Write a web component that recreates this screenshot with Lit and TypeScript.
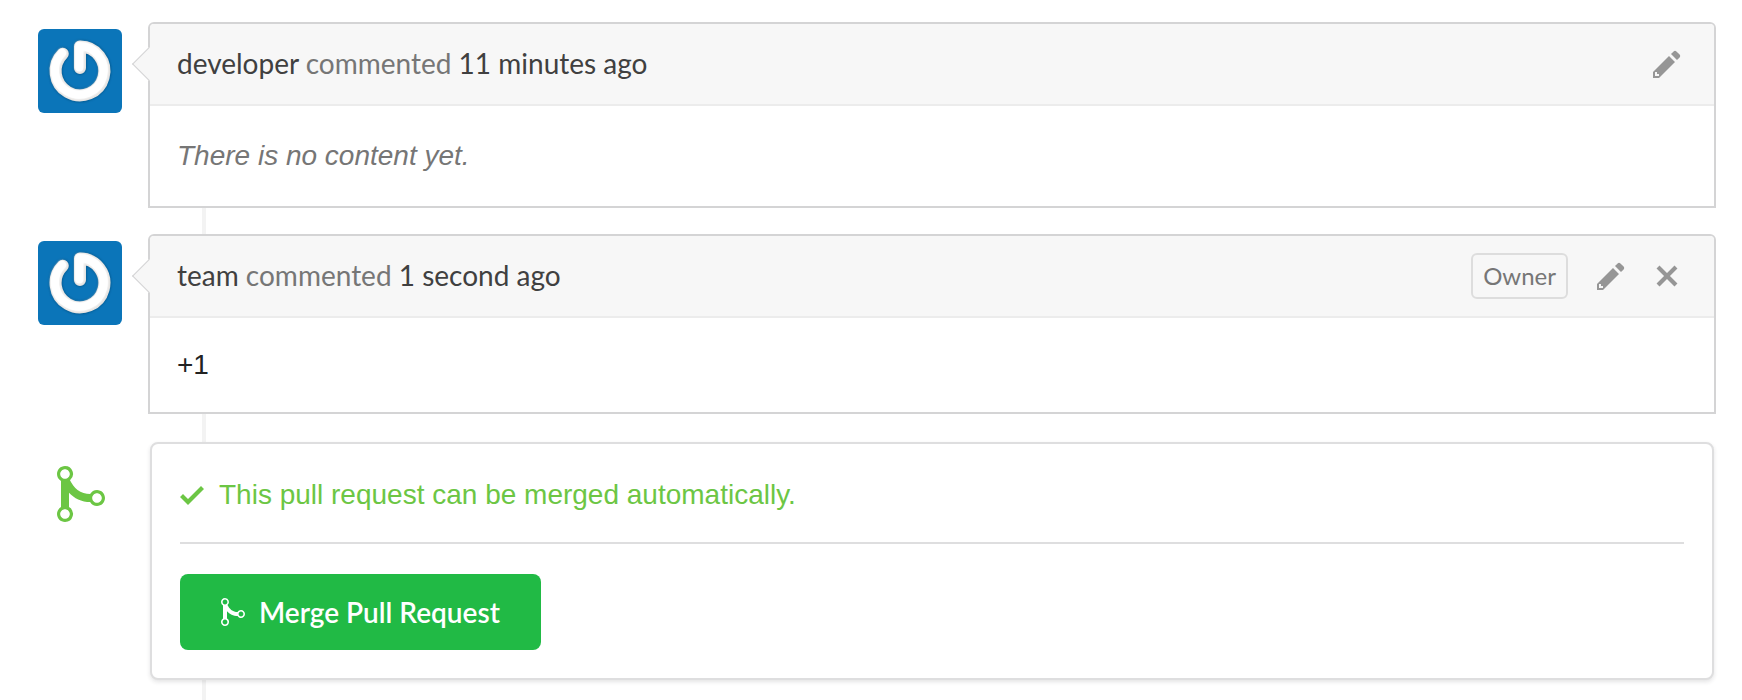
import { LitElement, html, css, svg, nothing } from "lit";
import { customElement, property } from "lit/decorators.js";

const PENCIL = svg`<path d="M0 12v3h3l8-8-3-3-8 8zm3 2H1v-2h1v1h1v1zm10.3-9.3L12 6 9 3l1.3-1.3a.996.996 0 0 1 1.41 0l1.59 1.59c.39.39.39 1.02 0 1.41z"/>`;
const CROSS = svg`<path d="M7.48 8l3.75 3.75-1.48 1.48L6 9.48l-3.75 3.75-1.48-1.48L4.52 8 .77 4.25l1.48-1.48L6 6.52l3.75-3.75 1.48 1.48z"/>`;
const CHECK = svg`<path d="M12 5l-8 8-4-4 1.5-1.5L4 10l6.5-6.5z"/>`;
const MERGE = svg`<path fill-rule="evenodd" d="M10 7c-.73 0-1.38.41-1.73 1.02V8C7.22 7.98 6 7.64 5.14 6.98c-.75-.58-1.5-1.61-1.89-2.44A1.993 1.993 0 0 0 2 .99C.89.99 0 1.89 0 3a2 2 0 0 0 1 1.72v6.56c-.59.35-1 .99-1 1.72 0 1.11.89 2 2 2a1.993 1.993 0 0 0 1-3.72V7.67c.67.7 1.44 1.27 2.3 1.69.86.42 2.03.63 2.97.64v-.02c.36.61 1 1.02 1.73 1.02 1.11 0 2-.89 2-2 0-1.11-.89-2-2-2zm-6.8 6c0 .66-.55 1.2-1.2 1.2-.65 0-1.2-.55-1.2-1.2 0-.65.55-1.2 1.2-1.2.65 0 1.2.55 1.2 1.2zM2 4.2C1.34 4.2.8 3.65.8 3c0-.65.55-1.2 1.2-1.2.65 0 1.2.55 1.2 1.2 0 .65-.55 1.2-1.2 1.2zm8 6c-.66 0-1.2-.55-1.2-1.2 0-.65.55-1.2 1.2-1.2.65 0 1.2.55 1.2 1.2 0 .65-.55 1.2-1.2 1.2z"/>`;

const icon = (shape: unknown, width: number, scale = 2) => html`
  <svg width=${width * scale} height=${16 * scale} viewBox="0 0 ${width} 16" fill="currentColor" aria-hidden="true">${shape}</svg>`;

@customElement("user-avatar")
class UserAvatar extends LitElement {
  static styles = css`
    :host { display: block; }
    .picture { display: block; width: 100%; border-radius: 6px; }
  `;
  render() {
    const power = "M42 39V17.6A24.4 24.4 0 1 1 24.8 24.7";
    return html`
      <svg class="picture" viewBox="0 0 84 84" fill="none" stroke-linecap="round" stroke-linejoin="round" aria-hidden="true">
        <defs>
          <filter id="soft" x="-20%" y="-20%" width="140%" height="140%"><feGaussianBlur stdDeviation="1"/></filter>
        </defs>
        <rect width="84" height="84" fill="#0b75b9"/>
        <path d=${power} stroke="#07568c" stroke-width="13" filter="url(#soft)"/>
        <path d=${power} stroke="#e4e2e0" stroke-width="12"/>
        <path d=${power} stroke="#fff" stroke-width="9" transform="translate(-0.7 -0.7)" filter="url(#soft)"/>
        <path d=${power} stroke="#fff" stroke-width="8" transform="translate(-0.7 -0.7)"/>
      </svg>`;
  }
}

@customElement("comment-card")
class CommentCard extends LitElement {
  @property() author = "";
  @property() when = "";
  @property() text = "";
  @property() badge = "";
  @property({ type: Boolean }) removable = false;

  static styles = css`
    :host { display: block; }
    .card { position: relative; border: 2px solid #d4d4d5; border-radius: 6px 6px 0 0; background: #fff; }
    .head {
      display: flex; align-items: center; gap: 26px; box-sizing: border-box; height: 82px;
      padding: 0 32px 0 27px; border-bottom: 2px solid #ececec; border-radius: 4px 4px 0 0;
      background: #f7f7f7; font: 28px/40px Lato, sans-serif; color: #767676;
    }
    .head::before {
      content: ""; position: absolute; left: -13px; top: 28px; box-sizing: border-box;
      width: 24px; height: 24px; border: solid #d4d4d5; border-width: 0 0 1px 1px;
      background: #f7f7f7; transform: rotate(45deg);
    }
    .title { position: relative; margin: 0; padding-bottom: 2px; flex: 1; }
    .link { color: #404040; text-decoration: none; }
    .badge {
      box-sizing: border-box; height: 46px; margin-right: 2px; padding: 0 10px; border: 2px solid #ddd;
      border-radius: 6px; font-size: 24px; line-height: 42px;
    }
    .action {
      display: flex; justify-content: center; width: 30px; padding: 0; border: 0;
      background: none; color: #969696; cursor: pointer;
    }
    .body { padding: 25px 27px; font: 28px/44px "Liberation Sans", Arial, sans-serif; color: #222; }
    .text { margin: 0; }
    .empty { padding: 28px 27px; font-style: italic; color: #767676; }
  `;
  render() {
    return html`
      <article class="card">
        <header class="head">
          <p class="title"><a class="link" href="#user">${this.author}</a> commented <a class="link" href="#comment">${this.when}</a></p>
          ${this.badge ? html`<span class="badge">${this.badge}</span>` : nothing}
          <button class="action" aria-label="Edit">${icon(PENCIL, 14)}</button>
          ${this.removable ? html`<button class="action" aria-label="Delete">${icon(CROSS, 12)}</button>` : nothing}
        </header>
        ${this.text
          ? html`<div class="body"><p class="text">${this.text}</p></div>`
          : html`<div class="body empty"><p class="text">There is no content yet.</p></div>`}
      </article>`;
  }
}

@customElement("merge-panel")
class MergePanel extends LitElement {
  static styles = css`
    :host { display: block; }
    .panel {
      margin: 2px; padding: 28px; border: 2px solid #dededf; border-radius: 8px;
      background: #fff; box-shadow: 0 2px 4px rgba(34, 36, 38, 0.12);
    }
    .status {
      display: flex; align-items: center; gap: 15px; margin: 0; padding: 1px 0 25px;
      font: 28px/44px "Liberation Sans", Arial, sans-serif; color: #6cc644;
    }
    .rule { margin: 0 0 30px; border: 0; border-top: 2px solid #dededf; }
    .merge {
      display: flex; align-items: center; gap: 14px; height: 76px; padding: 0 41px; border: 0;
      border-radius: 8px; background: #21ba45; color: #fff; font: 600 28px/32px Lato, sans-serif; cursor: pointer;
    }
  `;
  render() {
    return html`
      <section class="panel">
        <p class="status">${icon(CHECK, 12)}<span>This pull request can be merged automatically.</span></p>
        <hr class="rule" />
        <button class="merge">${icon(MERGE, 12)}<span>Merge Pull Request</span></button>
      </section>`;
  }
}

@customElement("app-root")
class AppRoot extends LitElement {
  static styles = css`
    :host { display: block; background: #fff; }
    .timeline {
      display: grid; grid-template-columns: 84px minmax(0, 1fr); gap: 26px; align-content: start;
      box-sizing: border-box; min-height: 100vh; padding: 22px 26px 18px 38px;
      background: linear-gradient(#f3f3f3, #f3f3f3) 202px 22px / 4px 100% no-repeat;
    }
    .avatar { margin-top: 7px; }
    .marker { display: flex; justify-content: center; padding: 22px 0 0 2px; color: #6cc644; }
  `;
  render() {
    return html`
      <main class="timeline">
        <user-avatar class="avatar"></user-avatar>
        <comment-card author="developer" when="11 minutes ago"></comment-card>
        <user-avatar class="avatar"></user-avatar>
        <comment-card author="team" when="1 second ago" text="+1" badge="Owner" removable></comment-card>
        <div class="marker">${icon(MERGE, 12, 4)}</div>
        <merge-panel></merge-panel>
      </main>`;
  }
}
